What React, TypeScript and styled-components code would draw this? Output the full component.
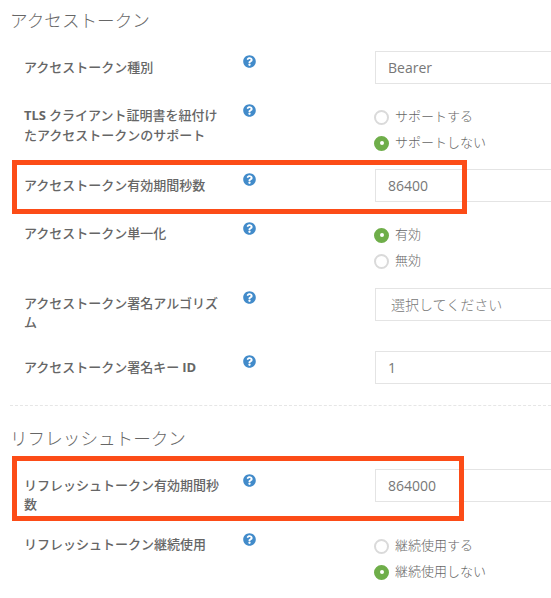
import React from "react";
import styled, { createGlobalStyle } from "styled-components";
import { FaQuestionCircle } from "react-icons/fa";

const Global = createGlobalStyle`
  html, body { margin: 0; padding: 0; background: #fff; overflow: hidden; }
  body { font-family: "Open Sans", "Noto Sans CJK JP", sans-serif; }
`;

const Page = styled.div`
  position: relative;
  width: 551px;
  height: 598px;
  overflow: hidden;
`;

const Heading = styled.h3<{ $top: number; $bottom: number }>`
  margin: ${(p) => p.$top}px 0 ${(p) => p.$bottom}px 10px;
  font-family: "Noto Sans CJK JP", sans-serif;
  font-size: 17.6px;
  line-height: 24px;
  font-weight: 300;
  color: #666;
`;

const Row = styled.div<{ $gap: number }>`
  display: grid;
  grid-template-columns: 200px 151px 176px;
  padding-left: 24px;
  margin-bottom: ${(p) => p.$gap}px;
`;

const Label = styled.div<{ $top?: number }>`
  font-family: "Noto Sans CJK JP", sans-serif;
  font-size: 13px;
  line-height: 19px;
  font-weight: 500;
  color: #666;
  padding: ${(p) => p.$top ?? 5}px 0 3px;
`;

const Latin = styled.span`
  font-family: "Open Sans", sans-serif;
  font-weight: 700;
`;

const HelpCell = styled.div<{ $top?: number }>`
  padding: ${(p) => p.$top ?? 4}px 0 0 19px;
  font-size: 13px;
  line-height: 13px;
  color: #428bca;
`;

const Field = styled.div`
  box-sizing: border-box;
  width: 240px;
  height: 33px;
  border: 1px solid #e4e4e4;
  background: #fff;
  padding-left: 12px;
  font-size: 14px;
  line-height: 31px;
  color: #777;
`;

const SelectField = styled(Field)`
  padding-left: 15px;
  line-height: 30px;
  font-family: "Noto Sans CJK JP", sans-serif;
  font-weight: 300;
`;

const RadioGroup = styled.div`
  display: flex;
  flex-direction: column;
  gap: 2px;
  padding-top: 5px;
`;

const RadioRow = styled.div`
  display: flex;
  align-items: center;
  gap: 6px;
  height: 24px;
  font-family: "Noto Sans CJK JP", sans-serif;
  font-weight: 300;
  font-size: 13px;
  color: #666;
`;

const RadioText = styled.span`
  margin-top: -3px;
`;

const RadioDot = styled.span<{ $on: boolean }>`
  box-sizing: border-box;
  width: 15px;
  height: 15px;
  margin-left: -1px;
  border-radius: 50%;
  background: ${(p) => (p.$on ? "#6fae4a" : "#fff")};
  border: 2px solid ${(p) => (p.$on ? "#6fae4a" : "#dadada")};
  display: flex;
  align-items: center;
  justify-content: center;
  &::after {
    content: "";
    display: ${(p) => (p.$on ? "block" : "none")};
    width: 4px;
    height: 4px;
    border-radius: 50%;
    background: #fff;
  }
`;

const Divider = styled.div`
  margin: 0 0 0 10px;
  border-top: 1px dashed #e6e6e6;
`;

const Highlight = styled.div<{ $x: number; $y: number; $w: number; $h: number }>`
  position: absolute;
  box-sizing: border-box;
  left: ${(p) => p.$x}px;
  top: ${(p) => p.$y}px;
  width: ${(p) => p.$w}px;
  height: ${(p) => p.$h}px;
  border: 5px solid #fc4c17;
`;

type Opt = { text: string; on: boolean };

const Radios = ({ options }: { options: Opt[] }) => (
  <RadioGroup>
    {options.map((o) => (
      <RadioRow key={o.text}>
        <RadioDot $on={o.on} />
        <RadioText>{o.text}</RadioText>
      </RadioRow>
    ))}
  </RadioGroup>
);

const Help = ({ top }: { top?: number }) => (
  <HelpCell $top={top}>
    <FaQuestionCircle />
  </HelpCell>
);

export default function App() {
  return (
    <Page>
      <Global />
      <Heading $top={8} $bottom={19}>アクセストークン</Heading>
      <Row $gap={16}>
        <Label $top={6}>アクセストークン種別</Label>
        <Help />
        <Field>Bearer</Field>
      </Row>
      <Row $gap={14}>
        <Label><Latin>TLS</Latin> クライアント証明書を紐付けたアクセストークンのサポート</Label>
        <Help />
        <Radios options={[{ text: "サポートする", on: false }, { text: "サポートしない", on: true }]} />
      </Row>
      <Row $gap={16}>
        <Label $top={6}>アクセストークン有効期間秒数</Label>
        <Help />
        <Field>86400</Field>
      </Row>
      <Row $gap={15}>
        <Label>アクセストークン単一化</Label>
        <Help />
        <Radios options={[{ text: "有効", on: true }, { text: "無効", on: false }]} />
      </Row>
      <Row $gap={17}>
        <Label>アクセストークン署名アルゴリズム</Label>
        <Help top={3} />
        <SelectField>選択してください</SelectField>
      </Row>
      <Row $gap={21}>
        <Label $top={6}>アクセストークン署名キー <Latin>ID</Latin></Label>
        <Help />
        <Field>1</Field>
      </Row>
      <Divider />
      <Heading $top={20} $bottom={19}>リフレッシュトークン</Heading>
      <Row $gap={13}>
        <Label $top={6}>リフレッシュトークン有効期間秒数</Label>
        <Help top={5} />
        <Field>864000</Field>
      </Row>
      <Row $gap={0}>
        <Label>リフレッシュトークン継続使用</Label>
        <Help />
        <Radios options={[{ text: "継続使用する", on: false }, { text: "継続使用しない", on: true }]} />
      </Row>
      <Highlight $x={12} $y={160} $w={455} $h={54} />
      <Highlight $x={12} $y={456} $w={452} $h={65} />
    </Page>
  );
}
